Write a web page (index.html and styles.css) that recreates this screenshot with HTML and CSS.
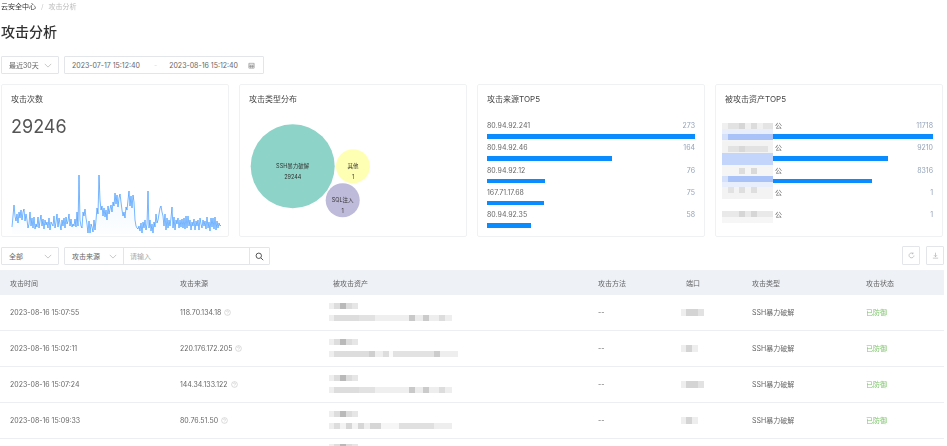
FILE: index.html
```html
<!DOCTYPE html>
<html lang="zh">
<head>
<meta charset="utf-8">
<title>攻击分析</title>
<link rel="stylesheet" href="styles.css">
</head>
<body>
<div class="page">
  <nav class="crumbs"><span class="crumb-root">云安全中心</span><span class="crumb-sep">/</span><span class="crumb-leaf">攻击分析</span></nav>
  <h1 class="title">攻击分析</h1>

  <div class="filters">
    <div class="ctl select-box"><span>最近30天</span><svg class="chev" viewBox="0 0 10 6"><path d="M1 1l4 4 4-4"/></svg></div>
    <div class="ctl range"><span>2023-07-17 15:12:40</span><span class="range-sep">-</span><span>2023-08-16 15:12:40</span>
      <svg class="cal" viewBox="0 0 8 8"><path d="M1 1.5h6v5.5h-6zM1 3.5h6M3 3.5v3.5M5 3.5v3.5M1 5.2h6"/></svg></div>
  </div>

  <section class="cards">
    <article class="card">
      <h2 class="card-title">攻击次数</h2>
      <div class="big-num">29246</div>
      <svg class="spark" viewBox="0 165 228 70">
        <defs><linearGradient id="sparkFill" x1="0" y1="0" x2="0" y2="1"><stop offset="0" stop-color="#cfe6ff"/><stop offset="1" stop-color="#f6fbff"/></linearGradient></defs>
        <path class="spark-area" d="M11 225 13 203 14 214 15 219 16 212 17 221 18 210 19 216 20 208 21 218 22 210 23 207 24 219 25 212 26 218 27 226 28 222 29 210 30 224 31 216 32 226 33 215 34 227 35 222 36 225 37 215 38 226 39 219 40 213 41 224 42 217 43 227 44 218 45 223 46 220 47 226 48 216 49 228 50 220 51 222 52 224 53 214 54 226 55 220 56 212 57 225 58 216 59 222 60 228 61 218 62 224 63 216 64 226 65 215 66 222 67 219 68 212 69 224 70 217 71 225 72 222 73 224 74 217 75 225 76 210 77 224 78 173 79 218 80 224 81 226 82 210 83 214 84 207 85 216 86 222 87 231 88 219 89 231 90 222 91 225 92 230 93 218 94 228 95 218 96 206 97 212 98 173 99 198 100 208 101 204 102 214 103 206 104 215 105 208 106 218 107 204 108 212 109 207 110 203 111 210 112 200 113 204 114 191 115 202 116 193 117 205 118 196 119 192 120 200 121 208 122 214 123 210 124 216 125 205 126 208 127 198 128 189 129 204 130 194 131 206 132 193 133 200 134 218 135 224 136 226 137 227 138 224 139 229 140 221 141 231 142 220 143 226 144 218 145 228 146 222 147 189 148 226 149 218 150 229 151 222 152 231 153 220 154 225 155 212 156 221 157 218 158 212 159 206 160 204 161 210 162 214 163 224 164 212 165 228 166 216 167 226 168 218 169 224 170 216 171 205 172 226 173 215 174 228 175 218 176 222 177 216 178 226 179 218 180 225 181 217 182 226 183 216 184 227 185 214 186 226 187 214 188 224 189 218 190 228 191 220 192 224 193 217 194 228 195 219 196 224 197 218 198 228 199 216 200 222 201 226 202 218 203 224 204 219 205 227 206 215 207 226 208 220 209 229 210 216 211 225 212 216 213 227 214 215 215 228 216 219 217 226 218 221 219 224 220 223V232H11Z"/>
        <path class="spark-line" d="M11 225 13 203 14 214 15 219 16 212 17 221 18 210 19 216 20 208 21 218 22 210 23 207 24 219 25 212 26 218 27 226 28 222 29 210 30 224 31 216 32 226 33 215 34 227 35 222 36 225 37 215 38 226 39 219 40 213 41 224 42 217 43 227 44 218 45 223 46 220 47 226 48 216 49 228 50 220 51 222 52 224 53 214 54 226 55 220 56 212 57 225 58 216 59 222 60 228 61 218 62 224 63 216 64 226 65 215 66 222 67 219 68 212 69 224 70 217 71 225 72 222 73 224 74 217 75 225 76 210 77 224 78 173 79 218 80 224 81 226 82 210 83 214 84 207 85 216 86 222 87 231 88 219 89 231 90 222 91 225 92 230 93 218 94 228 95 218 96 206 97 212 98 173 99 198 100 208 101 204 102 214 103 206 104 215 105 208 106 218 107 204 108 212 109 207 110 203 111 210 112 200 113 204 114 191 115 202 116 193 117 205 118 196 119 192 120 200 121 208 122 214 123 210 124 216 125 205 126 208 127 198 128 189 129 204 130 194 131 206 132 193 133 200 134 218 135 224 136 226 137 227 138 224 139 229 140 221 141 231 142 220 143 226 144 218 145 228 146 222 147 189 148 226 149 218 150 229 151 222 152 231 153 220 154 225 155 212 156 221 157 218 158 212 159 206 160 204 161 210 162 214 163 224 164 212 165 228 166 216 167 226 168 218 169 224 170 216 171 205 172 226 173 215 174 228 175 218 176 222 177 216 178 226 179 218 180 225 181 217 182 226 183 216 184 227 185 214 186 226 187 214 188 224 189 218 190 228 191 220 192 224 193 217 194 228 195 219 196 224 197 218 198 228 199 216 200 222 201 226 202 218 203 224 204 219 205 227 206 215 207 226 208 220 209 229 210 216 211 225 212 216 213 227 214 215 215 228 216 219 217 226 218 221 219 224 220 223"/>
      </svg>
    </article>

    <article class="card">
      <h2 class="card-title">攻击类型分布</h2>
      <svg class="bubbles" viewBox="239 84 228 153">
        <circle cx="292.7" cy="166.3" r="42" fill="#8dd3c7"/>
        <circle cx="353" cy="166.3" r="17" fill="#ffffb3"/>
        <circle cx="342.7" cy="200.3" r="17" fill="#bebada"/>
        <text class="bubble-text" x="292.7" y="167.6">SSH暴力破解</text>
        <text class="bubble-text" x="292.7" y="179">29244</text>
        <text class="bubble-text" x="353" y="167.6">其他</text>
        <text class="bubble-text" x="353" y="179">1</text>
        <text class="bubble-text" x="342.7" y="202">SQL注入</text>
        <text class="bubble-text" x="342.7" y="213.4">1</text>
      </svg>
    </article>

    <article class="card">
      <h2 class="card-title">攻击来源TOP5</h2>
      <ul class="rank">
        <li class="rank-row"><div class="rank-head"><span>80.94.92.241</span><span class="rank-val">273</span></div><div class="bar w100"></div></li>
        <li class="rank-row"><div class="rank-head"><span>80.94.92.46</span><span class="rank-val">164</span></div><div class="bar w60"></div></li>
        <li class="rank-row"><div class="rank-head"><span>80.94.92.12</span><span class="rank-val">76</span></div><div class="bar w278"></div></li>
        <li class="rank-row"><div class="rank-head"><span>167.71.17.68</span><span class="rank-val">75</span></div><div class="bar w274"></div></li>
        <li class="rank-row"><div class="rank-head"><span>80.94.92.35</span><span class="rank-val">58</span></div><div class="bar w212"></div></li>
      </ul>
    </article>

    <article class="card card-assets">
      <h2 class="card-title">被攻击资产TOP5</h2>
      <ul class="rank">
        <li class="rank-row"><div class="rank-head"><span class="asset-name">公</span><span class="rank-val">11718</span></div><div class="bar w100"></div></li>
        <li class="rank-row"><div class="rank-head"><span class="asset-name">公</span><span class="rank-val">9210</span></div><div class="bar w786"></div></li>
        <li class="rank-row"><div class="rank-head"><span class="asset-name">公</span><span class="rank-val">8316</span></div><div class="bar w710"></div></li>
        <li class="rank-row"><div class="rank-head"><span class="asset-name">公</span><span class="rank-val">1</span></div><div class="bar w0"></div></li>
        <li class="rank-row"><div class="rank-head"><span class="asset-name">公</span><span class="rank-val">1</span></div><div class="bar w0"></div></li>
      </ul>
      <svg class="asset-mask" viewBox="0 0 51 108">
        <rect x="0" y="6" width="51" height="12" fill="#f0f0f0"/>
        <rect x="6" y="6" width="11" height="6" fill="#e2e2e2"/><rect x="17" y="6" width="6" height="6" fill="#d6d6d6"/><rect x="29" y="6" width="6" height="6" fill="#dcdcdc"/><rect x="41" y="6" width="10" height="6" fill="#e4e4e4"/>
        <rect x="0" y="12" width="51" height="7" fill="#e8eefc"/>
        <rect x="0" y="17" width="51" height="6" fill="#a9c2f7"/><rect x="0" y="17" width="6" height="6" fill="#d5e1fb"/>
        <rect x="0" y="23" width="51" height="2" fill="#f4f4f4"/>
        <rect x="0" y="25" width="51" height="11" fill="#f3f3f3"/><rect x="6" y="29" width="40" height="6" fill="#e2e2e2"/><rect x="17" y="29" width="6" height="6" fill="#d8d8d8"/>
        <rect x="0" y="36" width="51" height="12" fill="#c3d5fb"/>
        <rect x="0" y="48" width="51" height="11" fill="#f5f5f5"/><rect x="17" y="51" width="6" height="6" fill="#dddddd"/><rect x="29" y="51" width="6" height="6" fill="#d9d9d9"/>
        <rect x="0" y="59" width="51" height="6" fill="#a9c2f7"/><rect x="0" y="59" width="6" height="6" fill="#d5e1fb"/>
        <rect x="0" y="65" width="51" height="5" fill="#e8eefc"/>
        <rect x="0" y="70" width="51" height="12" fill="#f3f3f3"/><rect x="6" y="70" width="6" height="6" fill="#e2e2e2"/><rect x="17" y="70" width="6" height="6" fill="#dedede"/><rect x="29" y="70" width="6" height="6" fill="#dedede"/>
        <rect x="0" y="94" width="51" height="6" fill="#e9e9e9"/><rect x="17" y="94" width="6" height="6" fill="#d6d6d6"/><rect x="29" y="94" width="6" height="6" fill="#d6d6d6"/>
        <rect x="0" y="100" width="51" height="6" fill="#f6f6f6"/>
      </svg>
    </article>
  </section>

  <div class="toolbar">
    <div class="toolbar-left">
      <div class="ctl select-box"><span>全部</span><svg class="chev" viewBox="0 0 10 6"><path d="M1 1l4 4 4-4"/></svg></div>
      <div class="ctl search-group">
        <div class="search-type"><span>攻击来源</span><svg class="chev" viewBox="0 0 10 6"><path d="M1 1l4 4 4-4"/></svg></div>
        <div class="search-input">请输入</div>
        <div class="search-btn"><svg class="search-icon" viewBox="0 0 10 10"><circle cx="4.2" cy="4.2" r="3"/><path d="M6.5 6.5l2.6 2.6"/></svg></div>
      </div>
    </div>
    <div class="toolbar-right">
      <div class="ctl icon-btn"><svg class="tool-icon" viewBox="0 0 8 8"><path d="M5.6 1.6A2.8 2.8 0 1 0 6.8 4M5.8 .6v1.4h-1.4"/></svg></div>
      <div class="ctl icon-btn"><svg class="tool-icon" viewBox="0 0 8 8"><path d="M4 .8v4.4M2.2 3.6l1.8 1.8 1.8-1.8M1 7h6"/></svg></div>
    </div>
  </div>

  <table class="grid">
    <colgroup><col class="c1"><col class="c2"><col class="c3"><col class="c4"><col class="c5"><col class="c6"><col class="c7"></colgroup>
    <thead>
      <tr><th>攻击时间</th><th>攻击来源</th><th>被攻击资产</th><th>攻击方法</th><th>端口</th><th>攻击类型</th><th>攻击状态</th></tr>
    </thead>
    <tbody>
      <tr>
        <td>2023-08-16 15:07:55</td>
        <td>118.70.134.18<svg class="help" viewBox="0 0 8 8"><circle cx="4" cy="4" r="3.3"/><path d="M2.9 3.2a1.1 1.1 0 1 1 1.6 1L4 4.7v.4M4 5.9v.3"/></svg></td>
        <td class="asset-cell"><div class="m-short"></div><div class="m-long"></div></td>
        <td>--</td>
        <td class="port-cell"><div class="m-port"></div></td>
        <td>SSH暴力破解</td>
        <td class="ok">已防御</td>
      </tr>
      <tr>
        <td>2023-08-16 15:02:11</td>
        <td>220.176.172.205<svg class="help" viewBox="0 0 8 8"><circle cx="4" cy="4" r="3.3"/><path d="M2.9 3.2a1.1 1.1 0 1 1 1.6 1L4 4.7v.4M4 5.9v.3"/></svg></td>
        <td class="asset-cell"><div class="m-short"></div><div class="m-long m-wide"></div></td>
        <td>--</td>
        <td class="port-cell"><div class="m-port m-port-small"></div></td>
        <td>SSH暴力破解</td>
        <td class="ok">已防御</td>
      </tr>
      <tr>
        <td>2023-08-16 15:07:24</td>
        <td>144.34.133.122<svg class="help" viewBox="0 0 8 8"><circle cx="4" cy="4" r="3.3"/><path d="M2.9 3.2a1.1 1.1 0 1 1 1.6 1L4 4.7v.4M4 5.9v.3"/></svg></td>
        <td class="asset-cell"><div class="m-short"></div><div class="m-long"></div></td>
        <td>--</td>
        <td class="port-cell"><div class="m-port"></div></td>
        <td>SSH暴力破解</td>
        <td class="ok">已防御</td>
      </tr>
      <tr>
        <td>2023-08-16 15:09:33</td>
        <td>80.76.51.50<svg class="help" viewBox="0 0 8 8"><circle cx="4" cy="4" r="3.3"/><path d="M2.9 3.2a1.1 1.1 0 1 1 1.6 1L4 4.7v.4M4 5.9v.3"/></svg></td>
        <td class="asset-cell"><div class="m-short"></div><div class="m-long m-alt"></div></td>
        <td>--</td>
        <td class="port-cell"><div class="m-port m-port-small"></div></td>
        <td>SSH暴力破解</td>
        <td class="ok">已防御</td>
      </tr>
      <tr class="row-peek">
        <td></td>
        <td></td>
        <td class="asset-cell"><div class="m-short"></div></td>
        <td></td>
        <td></td>
        <td></td>
        <td></td>
      </tr>
    </tbody>
  </table>
</div>
</body>
</html>
```

FILE: styles.css
```css
* { box-sizing: border-box; }
html, body { margin: 0; height: 446px; overflow: hidden; background: #fff; }
body {
  font-family: Inter, "Noto Sans CJK SC", sans-serif;
  font-size: 7px;
  color: #4a4a4a;
}
.page { width: 947px; padding: 2px 3px 0 1px; filter: blur(0.35px); }

.crumbs { height: 9px; line-height: 9px; display: flex; gap: 5px; }
.crumb-root { color: #333; }
.crumb-sep { color: #ccc; }
.crumb-leaf { color: #bbb; }

.title { margin: 11px 0 0; font-size: 14px; line-height: 20px; font-weight: 500; color: #333; }

.ctl { border: 1px solid #e2e5ea; border-radius: 1px; background: #fff; display: flex; align-items: center; }
.filters { display: flex; gap: 5px; margin-top: 14px; height: 18px; }
.select-box { width: 58px; padding: 0 6px 0 7px; justify-content: space-between; height: 18px; color: #666; }
.chev { width: 8px; height: 5px; fill: none; stroke: #aaa; stroke-width: .8; }
.range { width: 200px; padding: 0 8px 0 7px; color: #666; height: 18px; }
.range-sep { margin: 0 12px 0 14px; color: #ddd; }
.cal { width: 7px; height: 7px; margin-left: auto; fill: none; stroke: #777; stroke-width: .6; }

.cards { display: grid; grid-template-columns: repeat(4, 228px); gap: 10px; margin-top: 10px; }
.card {
  height: 153px;
  border: 1px solid #f0f1f3;
  border-radius: 2px;
  position: relative;
  display: flex;
  flex-direction: column;
  padding: 8px 9px 0;
}
.card-title { margin: 0; font-size: 8px; line-height: 12px; font-weight: 400; color: #444; }
.big-num { margin-top: 10px; font-size: 18px; line-height: 24px; color: #555; }
.spark { position: absolute; left: -1px; bottom: -1px; width: 228px; height: 70px; }
.spark-area { fill: url(#sparkFill); opacity: .35; }
.spark-line { fill: none; stroke: #1f86ff; stroke-width: .6; }
.bubbles { position: absolute; left: -1px; top: -1px; width: 228px; height: 153px; }
.bubble-text { font-size: 5.5px; text-anchor: middle; fill: #333; }

.rank { list-style: none; margin: 15px 0 0; padding: 0; display: flex; flex-direction: column; }
.rank-row { height: 22.3px; }
.rank-head { display: flex; justify-content: space-between; line-height: 12px; height: 12px; color: #666; }
.rank-val { color: #93a2b8; }
.bar { height: 4.5px; margin-top: 2px; background: #0a8cff; }
.w100 { width: 100%; }
.w60 { width: 60%; }
.w278 { width: 27.8%; }
.w274 { width: 27.4%; }
.w212 { width: 21.2%; }
.w786 { width: 78.6%; }
.w710 { width: 71%; }
.w0 { width: 0; }
.card-assets { padding-left: 6px; padding-right: 9px; }
.card-assets .card-title { padding-left: 3px; }
.asset-name { padding-left: 53px; }
.asset-mask { position: absolute; left: 6px; top: 32px; width: 51px; height: 108px; filter: blur(.6px); }

.toolbar { display: flex; justify-content: space-between; margin-top: 10px; height: 18px; }
.toolbar-left, .toolbar-right { display: flex; gap: 5px; }
.toolbar-right { gap: 6px; }
.search-group { width: 206px; height: 18px; }
.search-type { width: 59px; height: 100%; padding: 0 6px 0 7px; display: flex; align-items: center; justify-content: space-between; border-right: 1px solid #e2e5ea; color: #666; }
.search-input { flex: 1; padding-left: 6px; color: #aaa; }
.search-btn { width: 20px; height: 100%; border-left: 1px solid #e2e5ea; display: flex; align-items: center; justify-content: center; }
.search-icon { width: 9px; height: 9px; fill: none; stroke: #444; stroke-width: 1; }
.icon-btn { width: 18px; height: 19px; margin-top: -1px; justify-content: center; }
.tool-icon { width: 7px; height: 7px; fill: none; stroke: #999; stroke-width: .6; }

.grid { width: 944px; margin-top: 5px; margin-left: -1px; border-collapse: collapse; table-layout: fixed; }
.c1 { width: 170px; } .c2 { width: 153px; } .c3 { width: 265px; } .c4 { width: 88px; } .c5 { width: 66px; } .c6 { width: 114px; } .c7 { width: 88px; }
.grid th { height: 25px; padding: 0 0 0 10px; background: #eef1f6; font-weight: 400; text-align: left; color: #666; }
.grid td { height: 36px; padding: 0 0 0 10px; border-bottom: 1px solid #eceef1; color: #666; }
.grid tbody tr:first-child td { height: 35px; }
.grid td.ok { color: #7cc36a; }
.grid td.asset-cell { padding-left: 6px; }
.grid td.port-cell { padding-left: 5px; }
.grid .row-peek td { height: 8px; padding-top: 5px; vertical-align: top; border-bottom: 0; }
.row-peek .m-short { height: 3px; margin: 0; }
.help { width: 7px; height: 7px; margin-left: 3px; vertical-align: -1px; fill: none; stroke: #bbb; stroke-width: .6; }
.m-short, .m-long, .m-port { filter: blur(.7px); }
.m-short {
  width: 29px; height: 6px; margin-bottom: 6px;
  background: linear-gradient(90deg, #eee 0 5px, #ddd 5px 11px, #b9b9b9 11px 17px, #dcdcdc 17px 23px, #e6e6e6 23px 29px);
}
.m-long {
  width: 123px; height: 6px;
  background: linear-gradient(90deg, #eee 0 5px, #ddd 5px 30px, #e2e2e2 30px 46px, #efefef 46px 80px, #c9c9c9 80px 86px, #ececec 86px 94px, #cbcbcb 94px 100px, #eee 100px 110px, #ddd 110px 116px, #eee 116px 123px);
}
.m-wide {
  width: 129px;
  background: linear-gradient(90deg, #eee 0 5px, #ddd 5px 40px, #cfcfcf 40px 46px, #eee 46px 54px, #ddd 54px 60px, #fafafa 60px 64px, #e2e2e2 64px 105px, #ccc 105px 111px, #eee 111px 129px);
}
.m-alt {
  background: linear-gradient(90deg, #eee 0 5px, #ddd 5px 11px, #f3f3f3 11px 17px, #d6d6d6 17px 23px, #f3f3f3 23px 29px, #d6d6d6 29px 35px, #eee 35px 41px, #d6d6d6 41px 52px, #f6f6f6 52px 70px, #e0e0e0 70px 105px, #eee 105px 123px);
}
.m-port {
  width: 23px; height: 7px;
  background: linear-gradient(90deg, #eee 0 5px, #d4d4d4 5px 17px, #e2e2e2 17px 23px);
}
.m-port-small {
  width: 17px;
  background: linear-gradient(90deg, #eee 0 5px, #d4d4d4 5px 11px, #eee 11px 17px);
}
```
